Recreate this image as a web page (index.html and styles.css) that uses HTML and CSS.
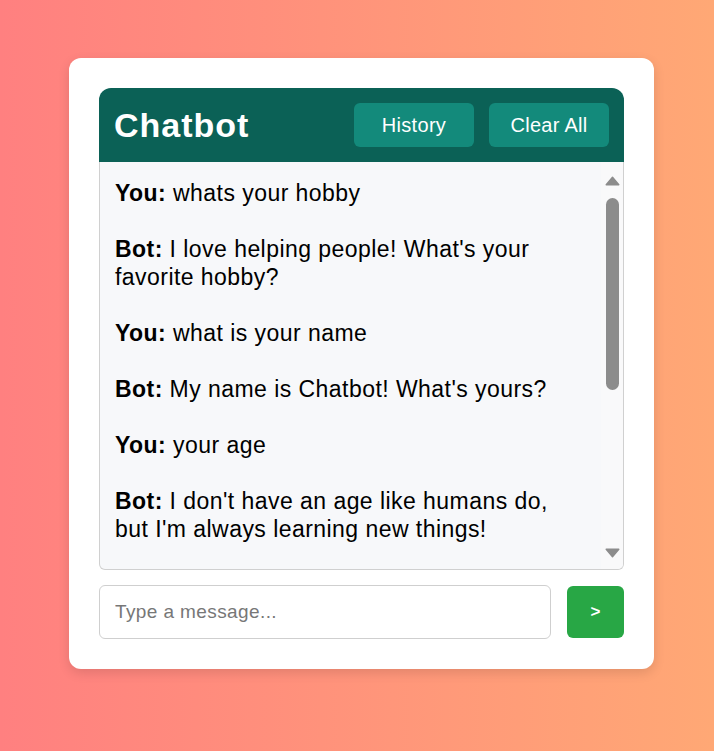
FILE: index.html
```html
<!DOCTYPE html>
<html lang="en">
<head>
<meta charset="utf-8">
<title>Chatbot</title>
<link rel="stylesheet" href="styles.css">
</head>
<body>
  <div class="card">
    <div class="header">
      <h1 class="title">Chatbot</h1>
      <div class="actions">
        <button class="hbtn">History</button>
        <button class="hbtn">Clear All</button>
      </div>
    </div>
    <div class="chat">
      <div class="messages">
        <p class="msg"><b>You:</b> whats your hobby</p>
        <p class="msg"><b>Bot:</b> I love helping people! What's your favorite hobby?</p>
        <p class="msg"><b>You:</b> what is your name</p>
        <p class="msg"><b>Bot:</b> My name is Chatbot! What's yours?</p>
        <p class="msg"><b>You:</b> your age</p>
        <p class="msg"><b>Bot:</b> I don't have an age like humans do, but I'm always learning new things!</p>
        <p class="msg"><b>You:</b> hello</p>
        <p class="msg"><b>Bot:</b> Hello! How can I help you?</p>
      </div>
      <div class="scrollbar" aria-hidden="true">
        <svg class="arrow" width="15" height="10" viewBox="0 0 15 10"><path d="M7.5 1.2 L13.8 8.8 L1.2 8.8 Z" fill="#8c8c8c" stroke="#8c8c8c" stroke-width="1.4" stroke-linejoin="round"/></svg>
        <div class="thumb"></div>
        <div class="spacer"></div>
        <svg class="arrow" width="15" height="10" viewBox="0 0 15 10"><path d="M7.5 8.8 L13.8 1.2 L1.2 1.2 Z" fill="#8c8c8c" stroke="#8c8c8c" stroke-width="1.4" stroke-linejoin="round"/></svg>
      </div>
    </div>
    <div class="composer">
      <input class="input" type="text" placeholder="Type a message...">
      <button class="send">&gt;</button>
    </div>
  </div>
</body>
</html>
```
FILE: styles.css
```css
* { box-sizing: border-box; }
html, body { height: 100%; }
body {
  margin: 0;
  padding: 58px 0 0 69px;
  background: linear-gradient(to right, #ff8080, #ffa875);
  font-family: "Liberation Sans", Arial, sans-serif;
}
.card {
  width: 585px;
  background: #fff;
  border-radius: 12px;
  padding: 30px;
  box-shadow: 0 4px 12px rgba(0, 0, 0, 0.12);
}
.header {
  height: 74px;
  background: #0b6156;
  border-radius: 12px 12px 0 0;
  display: flex;
  align-items: center;
  justify-content: space-between;
  padding: 0 15px;
}
.title {
  margin: 0;
  color: #fff;
  font-size: 34px;
  letter-spacing: 1px;
  font-weight: bold;
}
.actions { display: flex; gap: 15px; }
.hbtn {
  width: 120px;
  height: 44px;
  border: none;
  border-radius: 6px;
  background: #138a7b;
  color: #fff;
  font-family: "Liberation Sans", Arial, sans-serif;
  font-size: 20px;
  letter-spacing: 0.3px;
}
.chat {
  height: 408px;
  display: flex;
  background: #f7f8fa;
  border: 1px solid #d0d0d0;
  border-top: none;
  border-radius: 0 0 6px 6px;
  overflow: hidden;
}
.messages {
  flex: 1;
  overflow: hidden;
  padding: 17px 20px 0 15px;
}
.msg {
  margin: 0 0 28px;
  font-size: 23px;
  letter-spacing: 0.45px;
  line-height: 28px;
  color: #000;
}
.scrollbar {
  width: 22px;
  flex: none;
  display: flex;
  flex-direction: column;
  align-items: center;
  padding: 14px 0 11px;
  background: #f9f9fa;
}
.arrow { display: block; flex: none; }
.thumb {
  width: 13px;
  height: 192px;
  margin-top: 12px;
  border-radius: 7px;
  background: #8c8c8c;
  flex: none;
}
.spacer { flex: 1; }
.composer {
  display: flex;
  align-items: center;
  gap: 16px;
  margin-top: 15px;
}
.input {
  flex: 1;
  height: 54px;
  border: 1px solid #cfcfcf;
  border-radius: 6px;
  padding: 0 15px;
  font-family: "Liberation Sans", Arial, sans-serif;
  font-size: 19px;
  letter-spacing: 0.4px;
  outline: none;
}
.input::placeholder { color: #777; }
.send {
  width: 57px;
  height: 52px;
  border: none;
  border-radius: 6px;
  background: #28a745;
  color: #fff;
  font-family: "Liberation Sans", Arial, sans-serif;
  font-size: 17px;
  font-weight: bold;
}
```
